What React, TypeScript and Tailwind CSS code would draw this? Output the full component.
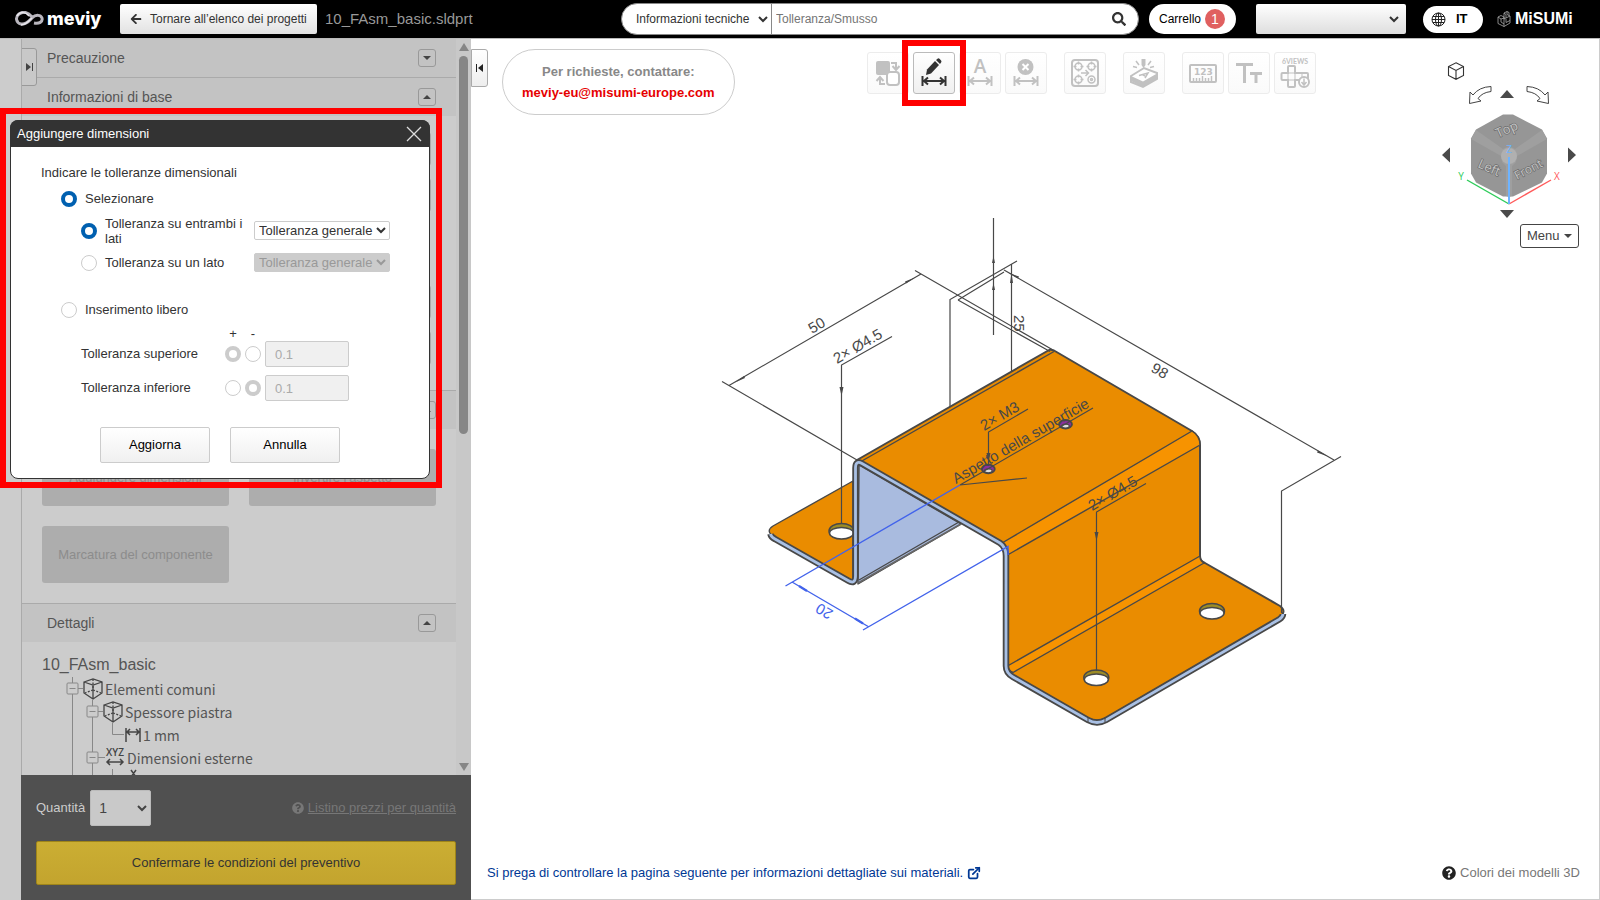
import React from "react";
import { FaArrowLeft, FaQuestionCircle, FaSearch } from "react-icons/fa";
import { FiExternalLink } from "react-icons/fi";

type Guide = { width: number; lines: number[]; box?: number; elbow?: number };

const LINE = "#484848";

const DimArrow = () => (
  <path d="M9.5 24v10M32.500 24v10M11 29h20M15 25.500l-4 3.500 4 3.500M27 25.500l4 3.500-4 3.500" fill="none" stroke="currentColor" strokeWidth="2" />
);

const ToolButton = ({ label, active, children }: { label: string; active?: boolean; children: React.ReactNode }) => (
  <button
    aria-label={label}
    className={
      active
        ? "size-[42px] rounded-[3px] border border-[#bbb] bg-linear-to-b from-white to-[#f0f0f0] text-[#333]"
        : "size-[42px] rounded-[3px] border border-[#ececec] bg-linear-to-b from-white to-[#fafafa] text-[#c1c1c1]"
    }
  >
    <svg viewBox="1 1 40 40" className="size-full">
      {children}
    </svg>
  </button>
);

const Toolbar = () => (
  <div className="flex gap-[17px]">
    <div className="flex gap-1">
      <ToolButton label="Sostituisci">
        <rect x="9" y="9" width="14" height="14" rx="2" fill="currentColor" />
        <rect x="20" y="20" width="12" height="13" rx="3" fill="#fff" stroke="currentColor" strokeWidth="2" />
        <path d="M24 11h5v6M25.500 14l3.500 4 3.500-4M18 32h-5v-6M9.500 29l3.500-4 3.500 4" fill="none" stroke="currentColor" strokeWidth="2" />
      </ToolButton>
      <ToolButton label="Aggiungere dimensioni" active>
        <path d="M14 17.500L22 9l4 4-8 8.500-5 1.500z" fill="currentColor" />
        <path d="M23 8l1.500-1.300q1-.7 2 .1l1.600 1.700q.8 1 0 2L27 12z" fill="currentColor" />
        <DimArrow />
      </ToolButton>
      <ToolButton label="Testo quota">
        <text x="21" y="21" textAnchor="middle" fontSize="19" fontWeight="600" fontFamily="Open Sans, sans-serif" fill="currentColor">A</text>
        <DimArrow />
      </ToolButton>
      <ToolButton label="Elimina quota">
        <circle cx="20.500" cy="15" r="8" fill="currentColor" />
        <path d="M17.500 12l6 6M23.500 12l-6 6" stroke="#fff" strokeWidth="2" />
        <DimArrow />
      </ToolButton>
    </div>
    <ToolButton label="Gruppo fori">
      <rect x="8" y="8" width="26" height="26" rx="3" fill="none" stroke="currentColor" strokeWidth="2" />
      <g fill="none" stroke="currentColor" strokeWidth="1.500">
        <circle cx="14.500" cy="14.500" r="3.500" />
        <circle cx="27.500" cy="14.500" r="3.500" />
        <circle cx="14.500" cy="27.500" r="3.500" />
        <circle cx="27.500" cy="27.500" r="3.500" />
        <circle cx="27.500" cy="27.500" r="1" />
        <path d="M14.500 9.500v3M14.500 16.500v3M9.500 14.500h3M16.500 14.500h3M27.500 9.500v3M27.500 16.500v3M22.500 14.500h3M29.500 14.500h3M14.500 22.500v3M14.500 29.500v3M9.500 27.500h3M16.500 27.500h3" />
        <path d="M17 21h7M21.500 18l3 3-3 3" />
      </g>
    </ToolButton>
    <ToolButton label="Incisione">
      <path d="M18.500 7h4v6l-2 3-2-3z" fill="currentColor" />
      <path d="M13 9l3 4M28 9l-3 4M10 14.500l4 1M31 14.500l-4 1" stroke="currentColor" strokeWidth="1.500" />
      <path d="M8 24l13-8 13 5v6l-14 8-12-5z" fill="#fff" stroke="currentColor" strokeWidth="2" />
      <path d="M8 24l12 5.500 14-8v5.500l-14 8-12-6z" fill="currentColor" />
      <path d="M16 23.500l9-2.500-3 5M19.500 22.500l2.500 1.500" fill="none" stroke="currentColor" strokeWidth="1.500" />
    </ToolButton>
    <div className="flex gap-1">
      <ToolButton label="Misura">
        <rect x="8" y="13" width="26" height="17" rx="1" fill="none" stroke="currentColor" strokeWidth="2" />
        <path d="M11.500 29v-3M14.500 29v-3M17.500 29v-3M20.500 29v-5M23.500 29v-3M26.500 29v-3M29.500 29v-5" stroke="currentColor" strokeWidth="1.500" />
        <text x="21.500" y="23" textAnchor="middle" fontSize="9" fontWeight="700" fontFamily="DejaVu Sans, sans-serif" fill="currentColor">123</text>
      </ToolButton>
      <ToolButton label="Dimensione testo">
        <path d="M8 12.500h17M16.500 12v19" stroke="currentColor" strokeWidth="3" />
        <path d="M22 21.500h12M28 21v10" stroke="currentColor" strokeWidth="3" />
      </ToolButton>
      <ToolButton label="Scarica 6 viste">
        <text x="21" y="12" textAnchor="middle" fontSize="7" fontWeight="700" fontFamily="Lato, sans-serif" fill="currentColor">6VIEWS</text>
        <path d="M14 21v-6q0-1 1-1h5q1 0 1 1v6h12q1 0 1 1v5q0 1-1 1H21v6q0 1-1 1h-5q-1 0-1-1v-6H8.500q-1 0-1-1v-5q0-1 1-1z" fill="none" stroke="currentColor" strokeWidth="2" />
        <path d="M14 21h7v7h-7zM28 21v7" fill="none" stroke="currentColor" strokeWidth="1" />
        <circle cx="30" cy="30" r="5" fill="#fff" stroke="currentColor" strokeWidth="2" />
        <path d="M30 26.500v6M27.500 30l2.500 3 2.500-3" fill="none" stroke="currentColor" strokeWidth="1.500" />
      </ToolButton>
    </div>
  </div>
);

const Header = () => (
  <header className="flex h-[39px] shrink-0 items-start border-b border-[#bbb] bg-black text-xs text-[#333]">
    <div className="flex h-[38px] w-full items-center">
      <a href="#home" className="ml-[15px] flex w-[105px] items-center gap-[2px]">
        <svg viewBox="0 0 30 16" className="h-4 w-[30px] shrink-0">
          <path d="M17 6C13 1 8 0 4 3s-3 9 2 10c5 1 8-3 11-6 4-4 9-3 10 0 1 4-3 6-8 5" fill="none" stroke="#b9b6be" strokeWidth="3" />
          <path d="M2 5C5 0 11 1 14 5M6 14c5 0 8-4 11-7" fill="none" stroke="#e8e6ec" strokeWidth="1.500" />
        </svg>
        <span className="font-[Inter,sans-serif] text-lg leading-6 font-extrabold text-white">meviy</span>
      </a>
      <button className="flex h-[30px] w-[197px] items-center gap-2 rounded-[2px] bg-linear-to-b from-white to-[#e2e2e2] pl-[10px] whitespace-nowrap">
        <FaArrowLeft className="size-3" />
        Tornare all’elenco dei progetti
      </button>
      <span className="ml-2 text-[15px] text-[#999]">10_FAsm_basic.sldprt</span>
      <form className="ml-auto flex h-8 w-[518px] items-center overflow-hidden rounded-full border border-[#888] bg-white">
        <select aria-label="Categoria di ricerca" className="h-full w-[150px] border-r border-[#888] pr-[2px] pl-[10px]">
          <option>Informazioni tecniche</option>
        </select>
        <input aria-label="Cerca" placeholder="Tolleranza/Smusso" className="min-w-0 flex-1 px-1 outline-none placeholder:text-[#757575]" />
        <button aria-label="Cerca" className="mr-3">
          <FaSearch className="size-[14px]" />
        </button>
      </form>
      <a href="#carrello" className="ml-[10px] flex h-[30px] w-[87px] items-center gap-1 rounded-full bg-white pl-[10px] text-black">
        Carrello
        <span className="flex size-5 items-center justify-center rounded-full bg-[#e06060] text-sm text-white">1</span>
      </a>
      <select aria-label="Account" className="ml-5 h-[30px] w-[150px] rounded-[2px] border-r-4 border-transparent bg-linear-to-b from-white to-[#dedede] bg-origin-border px-2" />
      <button className="ml-[17px] flex h-[27px] w-[60px] items-center gap-[10px] rounded-full bg-white pl-2 text-[13px] font-bold text-black">
        <svg viewBox="0 0 15 15" className="size-[15px]" fill="none" stroke="#222">
          <circle cx="7.500" cy="7.500" r="6.500" />
          <ellipse cx="7.500" cy="7.500" rx="3" ry="6.500" />
          <path d="M7.500 1v13M1 7.500h13M2 4.500h11M2 10.500h11" />
        </svg>
        IT
      </button>
      <a href="#misumi" className="mr-7 ml-[14px] flex w-[75px] items-center gap-1">
        <svg viewBox="0 0 14 17" className="h-[17px] w-[14px] shrink-0" fill="none" stroke="#aaa" strokeWidth=".8">
          <path d="M1 6l3-1.500L7 6v9.500l-6-3zM1 6l3 2 3-1M4 8v3l3 2M7 8l6-3v7l-6 3.500M13 5l-3-1.500v-3L7 2v6M10 .5l2 1v3M7 2l2 1.500v3.500M9 8v3.500l4-2" />
        </svg>
        <span className="text-base leading-5 font-bold text-white">MiSUMi</span>
      </a>
    </div>
  </header>
);

const Toggle = ({ open }: { open: boolean }) => (
  <button aria-label={open ? "Chiudi" : "Apri"} className="flex size-[18px] items-center justify-center rounded-[3px] border border-[#999]">
    <svg viewBox="0 0 8 4" className="h-1 w-2" fill="#444">
      <path d={open ? "M0 4L4 0l4 4z" : "M0 0l4 4 4-4z"} />
    </svg>
  </button>
);

const SectionHead = ({ title, open = true }: { title: string; open?: boolean }) => (
  <div className="flex h-[39px] shrink-0 items-center justify-between border-t border-[#aaa] bg-[#c3c3c3] pr-5 pl-[25px] text-sm text-[#555] first-of-type:h-[38px] first-of-type:border-t-0">
    <h2>{title}</h2>
    <Toggle open={open} />
  </div>
);

const PartIcon = () => (
  <svg viewBox="0 0 20 22" className="h-[22px] w-5 shrink-0" fill="none" stroke="#444" strokeWidth="1.300">
    <path d="M1 4l9-3 9 3v11l-9 6-9-6zM1 4l9 3 9-3M10 7v14" />
    <path d="M10 1v11M10 12l-8 3M10 12l8 3" strokeDasharray="2 1.500" />
  </svg>
);

const WidthIcon = () => (
  <svg viewBox="0 0 16 14" className="h-[14px] w-4 shrink-0" fill="none" stroke="#444" strokeWidth="1.500">
    <path d="M1 0v14M15 0v14M2 4h12M5 1L2 4l3 3M11 1l3 3-3 3" />
  </svg>
);

const XyzIcon = () => (
  <svg viewBox="0 0 20 20" className="size-5 shrink-0 overflow-visible" fill="none" stroke="#444" strokeWidth="1.500">
    <text x="10" y="8" textAnchor="middle" fontSize="10" fontWeight="600" fontFamily="Open Sans, sans-serif" fill="#444" stroke="none">XYZ</text>
    <path d="M2 14h16M5 11l-3 3 3 3M15 11l3 3-3 3" />
  </svg>
);

const XIcon = () => (
  <svg viewBox="0 0 20 23" className="h-[23px] w-5 shrink-0" fill="none" stroke="#444" strokeWidth="1.500">
    <path d="M6 1l5 7M11 1L6 8M2 15h16M5 12l-3 3 3 3M15 12l3 3-3 3" />
  </svg>
);

const TreeGuide = ({ width, lines, box, elbow }: Guide) => (
  <svg width={width} height="23" className="shrink-0" fill="none" stroke="#888">
    {lines.map((x) => (
      <path key={x} d={`M${x} 0v23`} />
    ))}
    {elbow && <path d={`M${elbow} 0v11.500h${width - elbow - 1}`} />}
    {box && (
      <>
        <path d={`M${box} 11.500H${width}`} />
        <rect x={box - 5.5} y="6" width="11" height="11" rx="1" fill="#ccc" />
        <path d={`M${box - 3} 11.500h6`} />
      </>
    )}
  </svg>
);

const TREE: { guide: Guide; icon: React.ReactNode; label?: string }[] = [
  { guide: { width: 41, lines: [30.5], box: 30.5 }, icon: <PartIcon />, label: "Elementi comuni" },
  { guide: { width: 61, lines: [30.5, 50.5], box: 50.5 }, icon: <PartIcon />, label: "Spessore piastra" },
  { guide: { width: 83, lines: [30.5, 50.5], elbow: 70.5 }, icon: <WidthIcon />, label: "1 mm" },
  { guide: { width: 63, lines: [30.5, 50.5], box: 50.5 }, icon: <XyzIcon />, label: "Dimensioni esterne" },
  { guide: { width: 83, lines: [30.5, 50.5, 70.5] }, icon: <XIcon /> },
];

const SidebarButton = ({ children }: { children: React.ReactNode }) => (
  <button disabled className="h-[57px] rounded-[3px] bg-[#adadad] text-[13px] text-[#8c8c8c]">
    {children}
  </button>
);

const Sidebar = () => (
  <aside className="flex w-[471px] shrink-0 flex-col bg-[#ccc] pl-[21px]">
    <div className="flex min-h-0 flex-1 border-l border-[#aaa]">
      <div className="relative flex min-w-0 flex-1 flex-col overflow-hidden">
        <button
          aria-label="Espandi pannello"
          className="absolute top-[9px] left-[-1px] flex h-[38px] w-4 items-center justify-center rounded-r-[3px] border border-[#999] bg-[#c8c8c8]"
        >
          <svg viewBox="0 0 7 8" className="h-2 w-[7px]" fill="#444">
            <path d="M0 0l5 4-5 4zM6 0h1v8H6z" />
          </svg>
        </button>
        <SectionHead title="Precauzione" open={false} />
        <SectionHead title="Informazioni di base" />
        <div className="flex h-[274px] shrink-0 flex-col gap-3 pt-4 pr-[25px] pl-5">
          <div className="h-[34px] shrink-0 rounded-[3px] border border-[#aaa]" />
          <div className="mb-[61px] h-[34px] shrink-0 rounded-[3px] border border-[#aaa]" />
          <div className="h-[34px] shrink-0 rounded-[3px] border border-[#aaa]" />
          <div className="h-[34px] shrink-0 rounded-[3px] border border-[#aaa]" />
        </div>
        <SectionHead title="Istruzioni" />
        <div className="grid shrink-0 grid-cols-2 gap-5 p-5">
          <SidebarButton>Aggiungere dimensioni</SidebarButton>
          <SidebarButton>Invertire l’aspetto</SidebarButton>
          <SidebarButton>Marcatura del componente</SidebarButton>
        </div>
        <SectionHead title="Dettagli" />
        <div className="flex flex-col pt-[11px] pl-5 text-[#555]">
          <p className="text-base leading-6">10_FAsm_basic</p>
          <ul className="font-[Noto_Sans_CJK_JP,sans-serif] text-sm">
            {TREE.map(({ guide, icon, label }, i) => (
              <li key={i} className="flex h-[23px] items-center">
                <TreeGuide {...guide} />
                {icon}
                {label && <span className="pl-[2px]">{label}</span>}
              </li>
            ))}
          </ul>
        </div>
      </div>
      <div className="flex w-[15px] flex-col items-center bg-[#c8c8c8] py-1">
        <svg viewBox="0 0 10 8" className="h-2 w-[10px]" fill="#868686">
          <path d="M5 0l5 8H0z" />
        </svg>
        <div className="mt-[5px] h-[378px] w-[9px] rounded-full bg-[#868686]" />
        <svg viewBox="0 0 10 8" className="mt-auto h-2 w-[10px]" fill="#868686">
          <path d="M5 8l5-8H0z" />
        </svg>
      </div>
    </div>
    <div className="flex h-[125px] shrink-0 flex-col justify-between bg-[#505050] p-[15px] text-[13px]">
      <div className="flex items-center">
        <label htmlFor="qty" className="text-[#ccc]">Quantità</label>
        <select id="qty" className="ml-[5px] h-9 w-[61px] rounded-[2px] border border-[#bbb] bg-[#c9c9c9] px-1 text-sm text-[#444]">
          <option>1</option>
        </select>
        <a href="#listino" className="ml-auto flex items-center gap-1 text-[#777]">
          <FaQuestionCircle className="size-3" />
          <span className="underline">Listino prezzi per quantità</span>
        </a>
      </div>
      <button className="h-11 rounded-[2px] border border-[#9f8519] bg-linear-to-b from-[#cbae33] to-[#c3a42e] text-[#333]">
        Confermare le condizioni del preventivo
      </button>
    </div>
  </aside>
);

const RADIO =
  "size-4 shrink-0 appearance-none rounded-full border border-[#ccc] bg-white checked:border-4 checked:border-[#0060b0] disabled:checked:border-[#ccc]";

const FreeRow = ({ id, label, minus }: { id: string; label: string; minus?: boolean }) => (
  <div className="mb-2 flex h-[26px] items-center pl-[70px]">
    <label htmlFor={id} className="w-36">{label}</label>
    <input type="radio" name={`${id}-sign`} aria-label={`${label} +`} disabled defaultChecked={!minus} className={RADIO} />
    <input type="radio" name={`${id}-sign`} aria-label={`${label} -`} disabled defaultChecked={minus} className={`${RADIO} ml-1`} />
    <input id={id} disabled defaultValue="0.1" className="ml-1 h-[26px] w-[84px] rounded-[2px] border border-[#ccc] bg-[#f0f0f0] px-[9px] text-[13px] text-[#aaa]" />
  </div>
);

const DimensionDialog = () => (
  <div className="absolute top-[108px] left-0 border-6 border-[#f00] pt-[6px] pr-[6px] pb-[3px] pl-1">
    <div role="dialog" aria-labelledby="dlg-title" className="w-[420px] rounded-lg border border-[#333] bg-white text-[13px] text-[#333]">
      <div className="-m-px flex h-[27px] items-center justify-between rounded-t-lg bg-[#333] pr-2 pl-[7px]">
        <h1 id="dlg-title" className="text-[#fff]">Aggiungere dimensioni</h1>
        <button aria-label="Chiudi finestra">
          <svg viewBox="0 0 16 16" className="size-4" stroke="#ddd" strokeWidth="1.300">
            <path d="M1 1l14 14M15 1L1 15" />
          </svg>
        </button>
      </div>
      <div className="pt-[17px]">
        <p className="pl-[30px] leading-5">Indicare le tolleranze dimensionali</p>
        <div className="mt-[6px] flex h-5 items-center gap-2 pl-[50px]">
          <input id="sel" type="radio" name="mode" defaultChecked className={RADIO} />
          <label htmlFor="sel">Selezionare</label>
        </div>
        <div className="mt-[6px] flex h-[31px] items-center pl-[70px]">
          <input id="both" type="radio" name="side" defaultChecked className={RADIO} />
          <label htmlFor="both" className="ml-2 w-[141px] leading-[15px]">Tolleranza su entrambi i lati</label>
          <select aria-label="Tolleranza su entrambi i lati" className="ml-2 h-[19px] w-[136px] rounded-[2px] border border-[#ccc] bg-white text-[13px]">
            <option>Tolleranza generale</option>
          </select>
        </div>
        <div className="flex h-[33px] items-center pl-[70px]">
          <input id="one" type="radio" name="side" className={RADIO} />
          <label htmlFor="one" className="ml-2 w-[141px]">Tolleranza su un lato</label>
          <select aria-label="Tolleranza su un lato" disabled className="ml-2 h-[19px] w-[136px] rounded-[2px] border border-[#ccc] bg-[#ccc] text-[13px] text-[#999]">
            <option>Tolleranza generale</option>
          </select>
        </div>
        <div className="mt-[21px] flex h-5 items-center gap-2 pl-[50px]">
          <input id="free" type="radio" name="mode" className={RADIO} />
          <label htmlFor="free">Inserimento libero</label>
        </div>
        <div className="mt-[6px] flex h-[15px] gap-1 pl-[214px] leading-[15px]">
          <span className="w-4 text-center">+</span>
          <span className="w-4 text-center">-</span>
        </div>
        <FreeRow id="upper" label="Tolleranza superiore" />
        <FreeRow id="lower" label="Tolleranza inferiore" minus />
      </div>
      <div className="flex gap-5 pt-[18px] pb-[15px] pl-[89px] text-black">
        <button className="h-9 w-[110px] rounded-[2px] border border-[#ccc] bg-linear-to-b from-white to-[#f0f0f0]">Aggiorna</button>
        <button className="h-9 w-[110px] rounded-[2px] border border-[#ccc] bg-linear-to-b from-white to-[#f0f0f0]">Annulla</button>
      </div>
    </div>
  </div>
);

const Hole = ({ x, y }: { x: number; y: number }) => (
  <g stroke={LINE} strokeWidth="1.500">
    <ellipse cx={x} cy={y} rx="12.500" ry="7.500" fill="#9c8c26" />
    <path d={`M${x - 12} ${y + 2}a12 5.500 0 0 1 24 0a12 6 0 0 1-24 0z`} fill="#fff" />
  </g>
);

const TappedHole = ({ x, y }: { x: number; y: number }) => (
  <g stroke={LINE} strokeWidth="1.800">
    <ellipse cx={x} cy={y} rx="6.500" ry="4.300" fill="#8c2f9c" />
    <ellipse cx={x} cy={y + 1.8} rx="3.800" ry="2" fill="#ddd" strokeWidth="1.200" />
  </g>
);

const PROFILE =
  "M770.500 534Q771 537 775 539L848 580.500Q855.500 585 855.500 576V468Q855.500 460 862 463.500L1000 543Q1006 547 1006 556V666Q1006 673 1013 677L1088 720Q1097 725 1106 720L1279 619.500Q1283 617 1283 614";

const Model = () => (
  <svg viewBox="471 39 1128 860" className="absolute inset-0 size-full" fontFamily="Liberation Sans, sans-serif" fontSize="15">
    <g stroke={LINE} strokeWidth="1.400" strokeLinejoin="round">
      <path d="M773 526L853 481V581L774 537Q765 531 773 526z" fill="#ea8c00" />
      <Hole x={841.5} y={531} />
      <path d="M859 465L961 524L858 584z" fill="#a9bbdf" />
      <path d="M859 580L959 522" fill="none" />
      <path d="M858 583L961 524" fill="none" stroke="#666" strokeWidth="2" />
      <path
        d="M857 460L1050 349.500L1054 350.500L1192 431Q1200 436 1200 445V556Q1200 561 1205 563L1280 606Q1287 611 1280 617L1106 718Q1097 723 1088 718L1012 675Q1007 672 1007 665V555Q1007 547 1002 543z"
        fill="#ea8c00"
        strokeWidth="2"
      />
      <path d="M1002 543L1192 431Q1200 436 1200 445L1007.500 555Q1008 547 1002 543z" fill="#f79300" />
      <path d="M1007.500 666L1200 556Q1200 561 1204 563L1013 672.500Q1008 670 1007.500 666z" fill="#f79300" />
      <path d="M861 461.500L1054 351.500" fill="none" />
    </g>
    <path d={PROFILE} fill="none" stroke={LINE} strokeWidth="6.500" />
    <path d={PROFILE} fill="none" stroke="#a9c0e4" strokeWidth="2.800" />
    <path d="M1088 717v5M1105 717v5" stroke={LINE} />
    <Hole x={1096.3} y={677.5} />
    <Hole x={1212} y={611} />
    <TappedHole x={988.3} y={469} />
    <TappedHole x={1065.5} y={424.3} />
    <g fill="none" stroke={LINE} strokeWidth="1.200">
      <path d="M722 381.500L857 460M729 385.500L921 274M915 270.500L1053 350M958 300L1050 351.500M958 300L1004 272M950 407V299.500L1017 261" />
      <path d="M993.500 218V335M1011.500 264V372" />
      <path d="M1004 270L1334 460M1341 456.500L1281.500 491V613" />
      <path d="M892 336.500L841.500 365V524M1028 409L988.500 432V466M1146 483.500L1096.500 512V671" />
      <path d="M1093 408L960 485L1027 478" />
    </g>
    <g fill={LINE}>
      <path d="M839.500 387h4l-2 9zM986.500 453h4l-2 9zM1094.500 532h4l-2 9zM992 263l1.500-7 1.500 7zM992 290l1.500-7 1.500 7zM1010 283l1.500-10 1.500 10zM735 382.500l9-6.500 1 2zM915 277.500l-10 4 1 2zM1008 272.500l11 4-1 2zM1328 456.500l-11-4 1-2z" />
      <text transform="translate(812 334) rotate(-30)">50</text>
      <text transform="translate(837 364) rotate(-30)">2× Ø4.5</text>
      <text transform="translate(984 431) rotate(-30)">2× M3</text>
      <text transform="translate(956 484) rotate(-30)">Aspetto della superficie</text>
      <text transform="translate(1092 511) rotate(-30)">2× Ø4.5</text>
      <text transform="translate(1150 371) rotate(30)">98</text>
      <text transform="translate(1014 315) rotate(90)">25</text>
    </g>
    <g fill="none" stroke="#4263eb" strokeWidth="1.400">
      <path d="M960 485L785.500 586M1008 555V546.500L863 630M792 582L869 627" />
      <path d="M799 586l8 5M863 623.500l-8-5" strokeWidth="2.200" />
    </g>
    <text transform="translate(834 611) rotate(210)" fill="#4263eb">20</text>
  </svg>
);

const ViewCube = () => (
  <svg viewBox="1440 84 138 138" className="size-[138px]" fontFamily="Open Sans, sans-serif">
    <g fill="#4a4a4a">
      <path d="M1500 98l7-8 7 8zM1500 210h14l-7 8zM1450 147.500v15l-8-7.500zM1568 147.500v15l8-7.500z" />
    </g>
    <g fill="#fff" stroke="#444">
      <path d="M1491 86.500v5q-9 1-13 7l3 2.500-11.500 2.500.5-11.500 3 3q6-8 18-8.500z" />
      <path d="M1527 86.500v5q9 1 13 7l-3 2.500 11.500 2.500-.5-11.500-3 3q-6-8-18-8.500z" />
    </g>
    <path d="M1503 114.500h10l29 15 5 9v35l-5 9-29 14h-10l-27-14-5-9v-35l5-9z" fill="#969696" />
    <path d="M1476 130l27 19 6-3 6 3 27-19 5 9-30 17-1 6-4 4v30l-3 1-3-1v-30l-4-4-1-6-30-17z" fill="#9f9f9f" />
    <circle cx="1509" cy="156" r="8" fill="#b0b0b0" />
    <g fill="#c4c4c4" stroke="#6c6c6c" strokeWidth="1.300" paintOrder="stroke" fontSize="13">
      <text transform="translate(1498 138) rotate(-24)">Top</text>
      <text transform="translate(1477 167) rotate(24)">Left</text>
      <text transform="translate(1517 180) rotate(-28)" fontSize="12">Front</text>
    </g>
    <g fill="none" strokeWidth="1.400">
      <path d="M1509 204L1467 180" stroke="#2ecc5a" />
      <path d="M1509 204L1551 180" stroke="#ff5a5a" />
      <path d="M1509 157V204" stroke="#6db3ff" strokeWidth="2" />
    </g>
    <g fontSize="10" textAnchor="middle">
      <text x="1557" y="180" fill="#ff5a5a">X</text>
      <text x="1461" y="180" fill="#2ecc5a">Y</text>
      <text x="1509" y="153" fill="#6db3ff">Z</text>
    </g>
  </svg>
);

const Viewport = () => (
  <main className="relative flex min-w-0 flex-1 flex-col border-r border-b border-[#ccc] bg-white">
    <Model />
    <div className="relative flex items-start">
      <button aria-label="Comprimi pannello" className="mt-[10px] flex h-[38px] w-[17px] items-center justify-center rounded-r-[3px] border border-[#aaa] bg-linear-to-b from-white to-[#eee]">
        <svg viewBox="0 0 7 8" className="h-2 w-[7px]" fill="#222">
          <path d="M7 0L2 4l5 4zM0 0h1v8H0z" />
        </svg>
      </button>
      <div className="mt-[10px] ml-[14px] rounded-full border border-[#ccc] px-[19px] py-[11px] text-center text-[13px] leading-[21px] font-bold text-[#888]">
        <p>Per richieste, contattare:</p>
        <a href="mailto:meviy-eu@misumi-europe.com" className="text-[#e60000]">meviy-eu@misumi-europe.com</a>
      </div>
      <div className="relative mt-[13px] ml-auto">
        <Toolbar />
        <div className="pointer-events-none absolute top-[-12px] left-[35px] h-[66px] w-16 border-6 border-[#f00]" />
      </div>
      <div className="mt-[23px] mr-5 ml-[124px] flex flex-col">
        <button aria-label="Vista isometrica" className="ml-[7px] size-[18px]">
          <svg viewBox="0 0 18 18" className="size-full" fill="none" stroke="#333" strokeWidth="1.100">
            <path d="M9 .8l7.500 3.700v9L9 17.300l-7.500-3.800v-9zM1.500 4.500L9 8.500l7.500-4M9 8.500v8.800" />
          </svg>
        </button>
        <div className="mt-1 mr-px">
          <ViewCube />
        </div>
        <button className="mt-[2px] flex h-6 w-[59px] items-center justify-between self-end rounded-[3px] border border-[#444] bg-white px-[6px] text-[13px] text-[#444]">
          Menu
          <svg viewBox="0 0 8 4" className="h-1 w-2" fill="#444">
            <path d="M0 0l4 4 4-4z" />
          </svg>
        </button>
      </div>
    </div>
    <div className="relative mt-auto mb-4 flex h-5 items-center justify-between pr-[19px] pl-4 text-[13px]">
      <a href="#materiali" className="flex items-center gap-1 text-[#003894]">
        Si prega di controllare la pagina seguente per informazioni dettagliate sui materiali.
        <FiExternalLink className="size-[14px]" strokeWidth="3" />
      </a>
      <a href="#colori" className="flex items-center gap-1 text-[#777]">
        <FaQuestionCircle className="size-[14px] text-[#222]" />
        Colori dei modelli 3D
      </a>
    </div>
  </main>
);

const App = () => (
  <div className="relative flex h-screen flex-col overflow-hidden font-['Liberation_Sans',Arial,sans-serif]">
    <Header />
    <div className="flex min-h-0 flex-1">
      <Sidebar />
      <Viewport />
    </div>
    <DimensionDialog />
  </div>
);

export default App;
